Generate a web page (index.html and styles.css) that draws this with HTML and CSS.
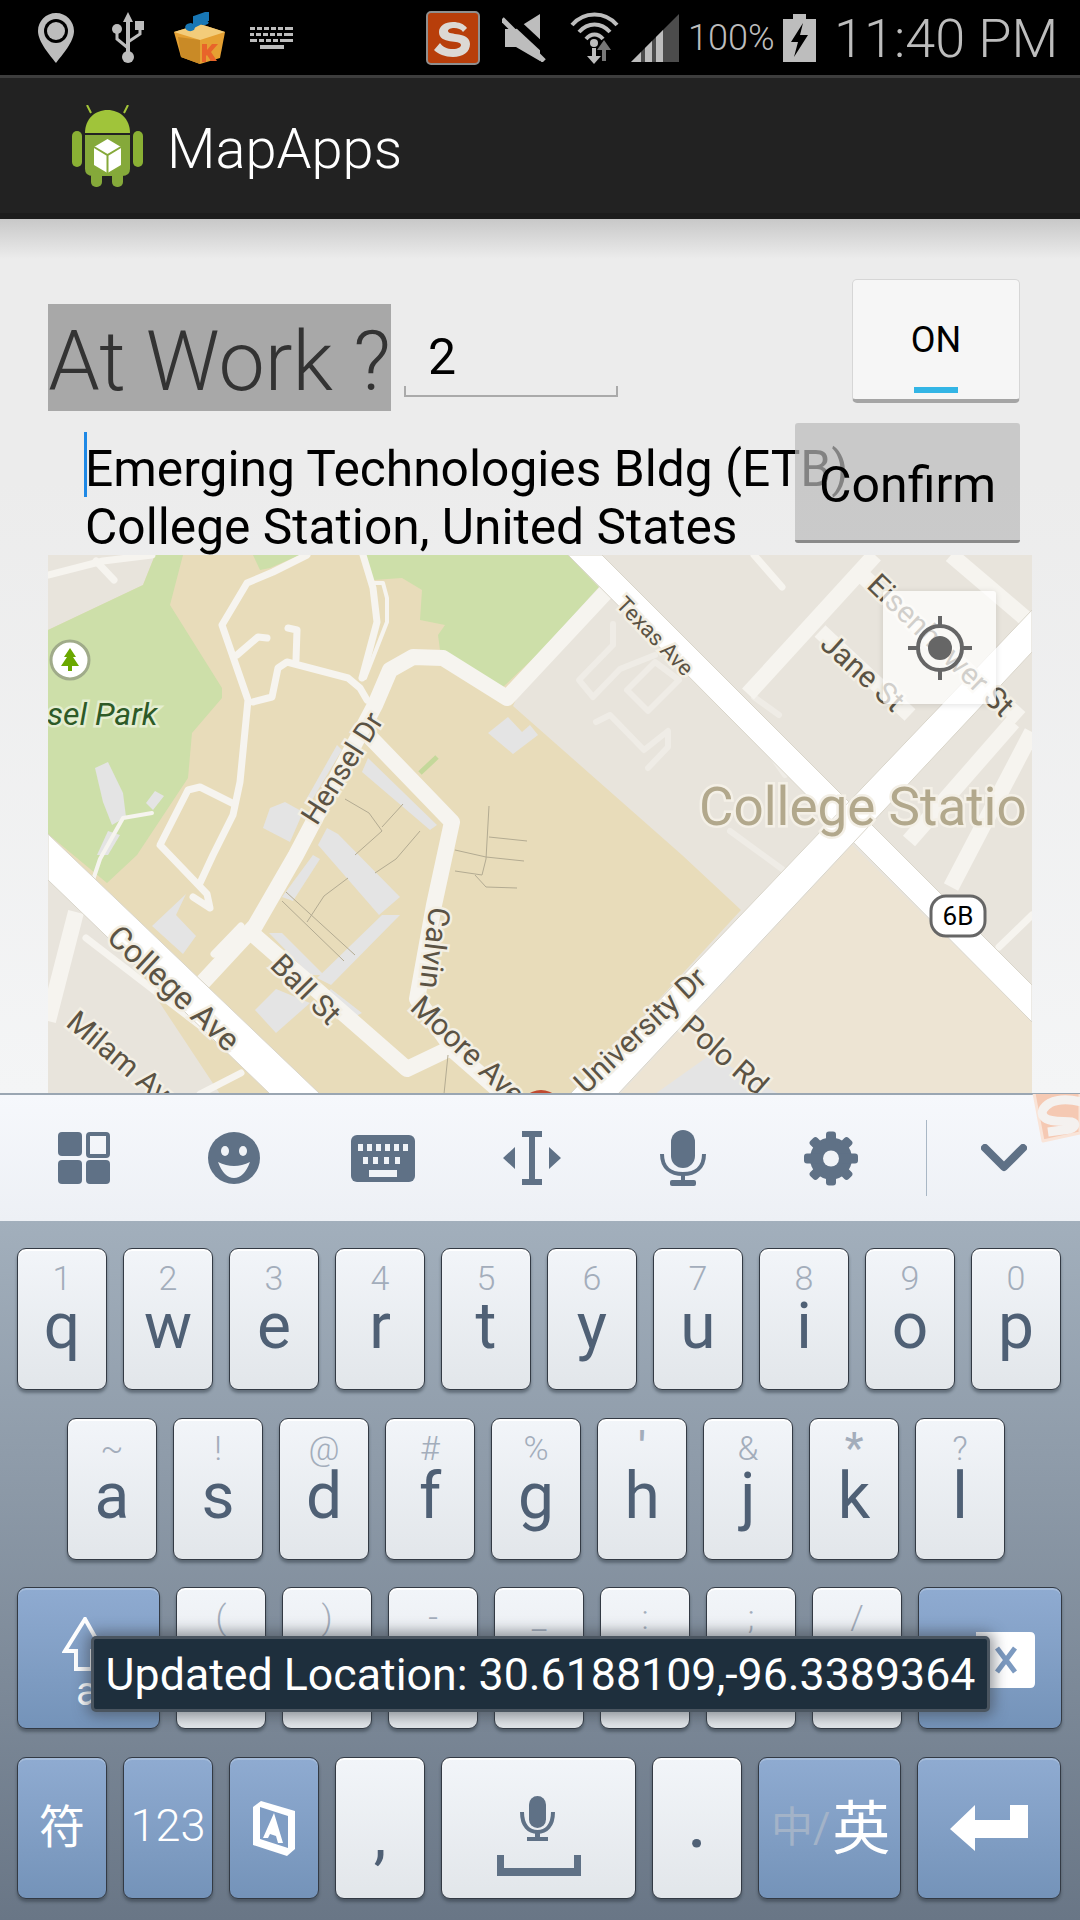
FILE: index.html
```html
<!DOCTYPE html>
<html lang="en">
<head>
    <meta charset="UTF-8">
    <meta name="viewport" content="width=device-width, initial-scale=1.0">
    <title>MapApps</title>
    <link rel="stylesheet" href="styles.css">
</head>
<body>
<div class="phone">

    <div class="status-bar">
        <svg class="sb-pin" width="36" height="50" viewBox="0 0 36 50"><path d="M18 0C8 0 0 8 0 18c0 11 12 24 18 32 6-8 18-21 18-32C36 8 28 0 18 0z" fill="#bdbdbd"/><circle cx="18" cy="18" r="12" fill="#000"/><circle cx="18" cy="18" r="9" fill="#bdbdbd"/></svg>
        <svg class="sb-usb" width="33" height="52" viewBox="0 0 33 52"><path d="M16 0l5 10h-3v30h-4V10h-3z" fill="#bdbdbd"/><circle cx="16" cy="45" r="6" fill="#bdbdbd"/><path d="M16 36L5 27V20M16 30l12-8v-7" fill="none" stroke="#bdbdbd" stroke-width="3"/><circle cx="5" cy="17" r="5" fill="#bdbdbd"/><rect x="23" y="9" width="9" height="9" fill="#bdbdbd"/></svg>
        <svg class="sb-box" width="51" height="52" viewBox="0 0 51 52"><path d="M0 20L26 12 51 20 46 46 26 52 7 45z" fill="#e5a032"/><path d="M0 20L26 28 51 20 26 12z" fill="#f3cc7a"/><path d="M26 28V52L7 45 4 25z" fill="#c98a26"/><path d="M28 32h5v6l5-6h6l-7 8 6 9h-6l-4-6-1 1v6h-4z" fill="#e8642a"/><path d="M20 16V5l14-5v9M20 16a4 3 0 1 1-1-3M34 10a4 3 0 1 1-1-3" fill="#1877b5" stroke="#1877b5" stroke-width="2"/></svg>
        <svg class="sb-kb" width="43" height="22" viewBox="0 0 43 22" fill="#bdbdbd"><rect x="0" y="0" width="5" height="3"/><rect x="7" y="0" width="5" height="3"/><rect x="14" y="0" width="5" height="3"/><rect x="21" y="0" width="5" height="3"/><rect x="28" y="0" width="5" height="3"/><rect x="35" y="0" width="8" height="3"/><rect x="0" y="6" width="4" height="3"/><rect x="6" y="6" width="5" height="3"/><rect x="13" y="6" width="5" height="3"/><rect x="20" y="6" width="5" height="3"/><rect x="27" y="6" width="5" height="3"/><rect x="34" y="6" width="9" height="3"/><rect x="0" y="12" width="7" height="3"/><rect x="9" y="12" width="5" height="3"/><rect x="16" y="12" width="5" height="3"/><rect x="23" y="12" width="5" height="3"/><rect x="30" y="12" width="13" height="3"/><rect x="10" y="18" width="24" height="4"/></svg>

        <svg class="sb-sogou" width="54" height="54" viewBox="0 0 54 54"><rect x="1" y="1" width="52" height="52" rx="4" fill="#b83e0a" stroke="#8f8f8f" stroke-width="2"/><path d="M41 17c-3-4-8-6-14-6-8 0-14 4-14 10 0 13 22 7 22 13 0 2-3 4-8 4-6 0-10-2-13-6l-6 7c4 4 11 7 19 7 10 0 17-5 17-13 0-13-22-8-22-13 0-2 3-3 6-3 4 0 7 1 9 4z" fill="#dcd8d4"/></svg>
        <svg class="sb-mute" width="49" height="48" viewBox="0 0 49 48"><path d="M38 0L14 15H3V33H14L38 47z" fill="#bdbdbd"/><path d="M5 0L49 41" stroke="#000" stroke-width="8"/><path d="M0 5L42 47" stroke="#bdbdbd" stroke-width="5"/></svg>
        <svg class="sb-wifi" width="49" height="53" viewBox="0 0 49 53"><g fill="none" stroke="#bdbdbd" stroke-width="4"><path d="M2 14C14 0 35 0 47 14"/><path d="M9 21C18 11 31 11 40 21"/><path d="M16 28C21 22 28 22 33 28"/></g><circle cx="24" cy="32" r="4" fill="#bdbdbd"/><path d="M22 37v8h-5l7 8 7-8h-5v-8z" fill="#bdbdbd"/><path d="M34 29l-7 10h5v11h4V39h5z" fill="#777"/></svg>
        <svg class="sb-signal" width="48" height="48" viewBox="0 0 48 48"><path d="M48 0V48H0z" fill="#4c4c4c"/><path d="M0 48L10 38V48zM14 34L21 27V48H14zM25 23L32 16V48H25z" fill="#bdbdbd"/></svg>
        <span class="sb-battery-text">100%</span>
        <svg class="sb-battery" width="33" height="48" viewBox="0 0 33 48"><path d="M10 0H23V5H33V48H0V5H10z" fill="#bdbdbd"/><path d="M20 9L8 28H15L11 43 25 21H17z" fill="#000"/></svg>
        <span class="sb-time">11:40 PM</span>
    </div>

    <div class="action-bar">
        <svg class="app-icon" width="71" height="82" viewBox="0 0 71 82">
            <path d="M19 8L15 0M52 8l4-8" stroke="#a4c639" stroke-width="2"/>
            <path d="M13 28C13 14 23 5 35.500 5S58 14 58 28z" fill="#a0c43a"/>
            <rect x="0" y="26" width="10" height="36" rx="5" fill="#8ab034"/>
            <rect x="61" y="26" width="10" height="36" rx="5" fill="#8ab034"/>
            <path d="M13 30H58V64Q58 71 50 71H21Q13 71 13 64z" fill="#85a93a"/>
            <rect x="19" y="66" width="11" height="16" rx="5" fill="#85a93a"/>
            <rect x="40" y="66" width="11" height="16" rx="5" fill="#85a93a"/>
            <path d="M35.500 34L49 42V60L35.500 68 22 60V42z" fill="#fff"/>
            <path d="M22 42L35.500 50 49 42M35.500 50V68" fill="none" stroke="#85a93a" stroke-width="2"/>
        </svg>
        <span class="app-title">MapApps</span>
    </div>

    <main class="content">
        <div class="top-row">
            <span class="at-work">At Work ?</span>
            <div class="number-input">2</div>
            <button class="toggle">ON<span class="toggle-light"></span></button>
        </div>

        <div class="address-row">
            <div class="address"><span class="caret"></span>Emerging Technologies Bldg (ETB)<br>College Station, United States</div>
            <button class="confirm">Confirm</button>
        </div>

        <div class="map">
            <svg class="map-canvas" width="984" height="539" viewBox="48 555 984 539">
                <rect x="48" y="555" width="984" height="539" fill="#e8e4dc"/>

                <polygon class="campus" points="155,555 582,555 513,706 682,855 741,910 572,1094 220,1094 48,834 48,630 143,585"/>
                <polygon class="plot" points="852,845 1032,1020 1032,1094 620,1094"/>
                <polygon class="park" points="155,555 183,555 170,605 222,688 222,698 192,733 188,778 137,855 107,883 48,834 48,630 143,585"/>
                <polygon class="park" points="253,555 300,555 270,568 260,570"/>
                <polygon class="park" points="362,555 568,555 599,587 540,652 503,687 440,650 438,635 445,625 420,620 422,590 402,578 373,580"/>
                <path d="M420 773L437 757" stroke="#c4d89a" stroke-width="5"/>

                <g class="building">
                    <polygon points="95,768 108,762 123,793 126,817 112,825 103,802"/>
                    <polygon points="155,791 164,796 153,810 146,803"/>
                    <polygon points="108,831 120,835 108,855 97,855"/>
                    <polygon points="285,802 303,812 290,842 263,828 270,808"/>
                    <polygon points="327,828 338,834 400,897 379,915 318,845"/>
                    <polygon points="337,745 342,750 312,800 307,798"/>
                    <polygon points="368,758 437,825 430,830 362,772"/>
                    <polygon points="186,894 152,926 183,954 196,936 176,915"/>
                    <polygon points="508,717 522,732 530,725 538,735 513,754 488,733"/>
                    <polygon points="276,989 255,1010 276,1033 310,1003"/>
                    <polygon points="710,1055 655,1094 779,1094"/>
                    <polygon points="382,915 400,915 331,985 317,978"/>
                    <polygon points="269,933 282,933 324,975 310,975"/>
                    <polygon points="282,897 313,855 320,859 293,901"/>
                    <polygon points="331,989 362,1013 344,1022 317,999"/>
                </g>

                <g class="paths">
                    <polyline points="307,555 273,572 247,583 222,625 248,700 240,782 233,815 213,855 200,883"/>
                    <polyline points="363,555 373,588 377,622 362,678"/>
                    <polyline class="thin" points="373,583 383,583 387,598 387,622 365,678"/>
                    <polyline points="48,575 103,561 152,555"/>
                    <polyline points="96,561 114,580"/>
                    <polyline points="237,655 258,637 267,638"/>
                    <polyline points="288,628 297,630 296,660"/>
                    <polyline points="253,702 272,697 278,668 287,662 348,678 360,688 367,700"/>
                    <polyline points="232,803 200,787 188,790 160,845 207,894 210,908 193,897"/>
                    <polyline class="thin" points="152,813 123,818 100,859 93,880"/>
                    <polyline points="754,555 782,587"/>
                    <polyline class="lot" points="730,831 782,869"/>
                    <polyline class="lot" points="758,736 785,775"/>
                    <polyline class="lot" points="754,697 779,715"/>
                    <polyline class="lot" points="613,624 613,645 579,680 593,697 620,669 655,655"/>
                    <polygon class="lot" points="655,662 627,690 648,711 679,680"/>
                    <polyline class="lot" points="596,722 610,715 644,750 668,731 668,747 648,768"/>
                    <polyline points="241,1073 200,1094"/>
                    <polyline points="241,926 214,954"/>
                    <polyline points="86,938 289,1094"/>
                    <polyline points="1032,915 999,947"/>
                </g>

                <g class="streets">
                    <polyline points="606,592 507,698 443,658 413,657 390,670 375,705 296,855 255,926 203,982"/>
                    <polyline points="370,737 452,822 434,905 417,999 455,1052 503,1094"/>
                    <polyline points="255,936 407,1069 451,1048"/>
                    <polyline points="76,912 48,1021"/>
                    <polyline points="875,555 748,694"/>
                    <polyline points="951,555 1032,624"/>
                    <polyline points="854,568 1020,718"/>
                    <polyline points="820,631 910,715"/>
                    <polyline points="1013,722 909,841"/>
                    <polyline points="1032,732 951,887"/>
                </g>

                <g class="contours">
                    <polyline points="345,799 369,813 382,831 355,855"/>
                    <polyline points="403,804 382,827"/>
                    <polyline points="420,831 396,859 375,873"/>
                    <polyline points="489,806 486,859 482,875 455,871"/>
                    <polyline points="489,837 527,841"/>
                    <polyline points="455,850 486,857 524,861"/>
                    <polyline points="475,875 486,887 517,888"/>
                    <polyline points="348,878 324,896 307,922"/>
                    <polyline points="286,892 355,955"/>
                    <polyline points="282,901 344,961"/>
                    <polyline points="448,1055 444,1094"/>
                </g>

                <g class="highways">
                    <polygon points="568,555 602,555 1032,985 1032,1022"/>
                    <polygon points="48,834 48,880 270,1094 320,1094"/>
                    <polygon points="1032,610 1032,652 618,1094 570,1094"/>
                </g>

                <circle cx="70" cy="660" r="19" fill="#fff" stroke="#a0ab8a" stroke-width="3"/>
                <path d="M70 648l6 9h-3l6 9h-7v5h-4v-5h-7l6-9h-3z" fill="#6aa800"/>
                <circle cx="541" cy="1112" r="22" fill="#c0492f"/>

                <text class="park-label" x="47" y="725">sel Park</text>
                <text class="big-label" x="699" y="825">College Statio</text>

                <g text-anchor="middle">
                    <text class="road-label small" transform="translate(655 636) rotate(46)" dy=".35em">Texas Ave</text>
                    <text class="road-label" transform="translate(941 645) rotate(44)" dy=".35em">Eisenhower St</text>
                    <text class="road-label" transform="translate(863 672) rotate(42)" dy=".35em">Jane St</text>
                    <text class="road-label mid" transform="translate(342 768) rotate(-57.500)" dy=".35em">Hensel Dr</text>
                    <text class="road-label" transform="translate(435 948) rotate(97)" dy=".35em">Calvin</text>
                    <text class="road-label" transform="translate(468 1050) rotate(43)" dy=".35em">Moore Ave</text>
                    <text class="road-label large" transform="translate(174 988) rotate(43)" dy=".35em">College Ave</text>
                    <text class="road-label" transform="translate(306 989) rotate(45)" dy=".35em">Ball St</text>
                    <text class="road-label" transform="translate(125 1062) rotate(40)" dy=".35em">Milam Ave</text>
                    <text class="road-label" transform="translate(640 1030) rotate(-43)" dy=".35em">University Dr</text>
                    <text class="road-label" transform="translate(725 1055) rotate(41)" dy=".35em">Polo Rd</text>
                </g>

                <rect x="931" y="896" width="54" height="40" rx="15" fill="#fff" stroke="#666" stroke-width="3"/>
                <text class="shield-label" x="958" y="925" text-anchor="middle">6B</text>
            </svg>

            <div class="my-location">
                <svg width="68" height="68" viewBox="0 0 68 68"><circle cx="34" cy="34" r="22" fill="none" stroke="#666" stroke-width="4"/><circle cx="34" cy="34" r="12" fill="#666"/><path d="M34 2v10M34 56v10M2 34h10M56 34h10" stroke="#666" stroke-width="4"/></svg>
            </div>
        </div>
    </main>

    <div class="keyboard">
        <div class="kb-tools">
            <svg class="tool-grid" width="52" height="52" viewBox="0 0 52 52"><rect width="24" height="24" rx="4" fill="#5f7186"/><rect x="30" y="2" width="20" height="22" rx="2" fill="none" stroke="#5f7186" stroke-width="4"/><rect y="28" width="24" height="24" rx="4" fill="#5f7186"/><rect x="28" y="28" width="24" height="24" rx="4" fill="#5f7186"/></svg>
            <svg class="tool-smile" width="52" height="52" viewBox="0 0 52 52"><circle cx="26" cy="26" r="26" fill="#5f7186"/><ellipse cx="17" cy="19" rx="4" ry="5" fill="#f0f3f7"/><ellipse cx="35" cy="19" rx="4" ry="5" fill="#f0f3f7"/><path d="M10 30Q26 38 42 30Q36 46 26 46T10 30z" fill="#f0f3f7"/></svg>
            <svg class="tool-keys" width="64" height="47" viewBox="0 0 64 47"><rect width="64" height="47" rx="6" fill="#5f7186"/><g fill="#f0f3f7"><rect x="7" y="9" width="5" height="7"/><rect x="16" y="9" width="5" height="7"/><rect x="25" y="9" width="5" height="7"/><rect x="34" y="9" width="5" height="7"/><rect x="43" y="9" width="5" height="7"/><rect x="52" y="9" width="5" height="7"/><rect x="12" y="22" width="5" height="7"/><rect x="22" y="22" width="5" height="7"/><rect x="33" y="22" width="5" height="7"/><rect x="44" y="22" width="5" height="7"/><rect x="18" y="35" width="28" height="7"/></g></svg>
            <svg class="tool-cursor" width="58" height="54" viewBox="0 0 58 54" fill="#5f7186"><path d="M19 0H39V6H32V48H39V54H19V48H26V6H19z"/><path d="M0 27L12 16V38zM58 27L46 16V38z"/></svg>
            <svg class="tool-mic" width="46" height="56" viewBox="0 0 46 56" fill="#5f7186"><rect x="11" y="0" width="24" height="38" rx="12"/><path d="M2 24C2 38 11 44 23 44S44 38 44 24" fill="none" stroke="#5f7186" stroke-width="4"/><rect x="21" y="42" width="4" height="10"/><rect x="10" y="50" width="26" height="6" rx="2"/></svg>
            <svg class="tool-gear" width="54" height="55" viewBox="0 0 54 55" fill="#5f7186"><g transform="translate(27 27.500)"><circle r="21"/><rect x="-5" y="-27" width="10" height="54" rx="3"/><rect x="-5" y="-27" width="10" height="54" rx="3" transform="rotate(45)"/><rect x="-5" y="-27" width="10" height="54" rx="3" transform="rotate(90)"/><rect x="-5" y="-27" width="10" height="54" rx="3" transform="rotate(135)"/><circle r="8" fill="#f0f3f7"/></g></svg>
            <span class="tool-divider"></span>
            <svg class="tool-down" width="46" height="28" viewBox="0 0 46 28"><path d="M4 4L23 23 42 4" fill="none" stroke="#5f7186" stroke-width="8" stroke-linejoin="round" stroke-linecap="round"/></svg>
        </div>

        <div class="kb-keys">
            <div class="kb-row">
                <div class="key"><span class="hint">1</span><span class="letter">q</span></div>
                <div class="key"><span class="hint">2</span><span class="letter">w</span></div>
                <div class="key"><span class="hint">3</span><span class="letter">e</span></div>
                <div class="key"><span class="hint">4</span><span class="letter">r</span></div>
                <div class="key"><span class="hint">5</span><span class="letter">t</span></div>
                <div class="key"><span class="hint">6</span><span class="letter">y</span></div>
                <div class="key"><span class="hint">7</span><span class="letter">u</span></div>
                <div class="key"><span class="hint">8</span><span class="letter">i</span></div>
                <div class="key"><span class="hint">9</span><span class="letter">o</span></div>
                <div class="key"><span class="hint">0</span><span class="letter">p</span></div>
            </div>
            <div class="kb-row row-home">
                <div class="key"><span class="hint">~</span><span class="letter">a</span></div>
                <div class="key"><span class="hint">!</span><span class="letter">s</span></div>
                <div class="key"><span class="hint">@</span><span class="letter">d</span></div>
                <div class="key"><span class="hint">#</span><span class="letter">f</span></div>
                <div class="key"><span class="hint">%</span><span class="letter">g</span></div>
                <div class="key"><span class="hint heavy">'</span><span class="letter">h</span></div>
                <div class="key"><span class="hint">&amp;</span><span class="letter">j</span></div>
                <div class="key"><span class="hint heavy">*</span><span class="letter">k</span></div>
                <div class="key"><span class="hint">?</span><span class="letter">l</span></div>
            </div>
            <div class="kb-row">
                <div class="key blue wide shift">
                    <svg width="60" height="60" viewBox="0 0 60 60"><path d="M23 2L3 34H14V52H30V34H41z" fill="none" stroke="#fff" stroke-width="4"/></svg>
                    <span class="shift-a">a</span>
                </div>
                <div class="key"><span class="hint">(</span></div>
                <div class="key"><span class="hint">)</span></div>
                <div class="key"><span class="hint">-</span></div>
                <div class="key"><span class="hint">_</span></div>
                <div class="key"><span class="hint">:</span></div>
                <div class="key"><span class="hint">;</span></div>
                <div class="key"><span class="hint">/</span></div>
                <div class="key blue wide del">
                    <svg width="64" height="56" viewBox="0 0 64 56"><path d="M5 0H59Q64 0 64 5V51Q64 56 59 56H5z" fill="#fff"/><path d="M26 16L44 40M44 16L26 40" stroke="#7c9ac0" stroke-width="5"/></svg>
                </div>
            </div>
            <div class="kb-row">
                <div class="key blue"><span class="fn-text fu">符</span></div>
                <div class="key blue"><span class="fn-text">123</span></div>
                <div class="key blue">
                    <svg width="46" height="58" viewBox="0 0 46 58"><path d="M2 8L10 2 44 12V50L36 57 2 46z" fill="#fff"/><path d="M9 8L37 17V49L9 40z" fill="#7f9dc4"/><path d="M23 14L32 44H27L25 37 19 35 17 39H12z" fill="#fff"/></svg>
                </div>
                <div class="key"><span class="punct">,</span></div>
                <div class="key space">
                    <svg width="84" height="80" viewBox="0 0 84 80" fill="#5f7186"><rect x="32" y="0" width="17" height="32" rx="8.500"/><path d="M25 16C25 30 32 36 40.500 36S56 30 56 16" fill="none" stroke="#5f7186" stroke-width="4"/><rect x="38" y="36" width="5" height="7"/><rect x="30" y="41" width="21" height="4"/><path d="M0 59H7V72H77V59H84V80H0z"/></svg>
                </div>
                <div class="key"><span class="punct dot">.</span></div>
                <div class="key blue wide lang"><span class="lang-off">中/</span><span class="lang-on">英</span></div>
                <div class="key blue wide enter">
                    <svg width="78" height="46" viewBox="0 0 78 46"><path d="M0 24L25 0V15H60V0H78V33H25V46z" fill="#fff"/></svg>
                </div>
            </div>
        </div>

        <div class="toast">Updated Location: 30.6188109,-96.3389364</div>

        <svg class="sogou-float" width="50" height="50" viewBox="0 0 50 50"><path d="M3 -6L13 47 50 39V-6z" fill="#f5c9b3" stroke="#f9e4d8" stroke-width="3" stroke-linejoin="round"/><path d="M52 8C40 5 28 5 20 9 13 13 10 19 14 23 18 28 30 27 42 28 46 29 46 33 40 35L18 38" fill="none" stroke="#f4f1ef" stroke-width="9"/></svg>
    </div>
</div>
</body>
</html>
```

FILE: styles.css
```css
* {
    box-sizing: border-box;
}
body {
    margin: 0;
    font-family: Roboto, "Noto Sans CJK SC", sans-serif;
}
.phone {
    width: 1080px;
    height: 1920px;
    overflow: hidden;
    position: relative;
    background: #eee;
}

/* status bar */
.status-bar {
    height: 75px;
    background: #000;
    display: flex;
    align-items: center;
    color: #bdbdbd;
}
.status-bar svg {
    flex: none;
}
.sb-pin { margin-left: 38px; }
.sb-usb { margin-left: 38px; }
.sb-box { margin-left: 29px; }
.sb-kb { margin-left: 25px; }
.sb-sogou { margin-left: 133px; }
.sb-mute { margin-left: 22px; }
.sb-wifi { margin-left: 19px; }
.sb-signal { margin-left: 12px; }
.sb-battery-text {
    margin-left: 9px;
    width: 86px;
    font-size: 36px;
    font-weight: 300;
    white-space: nowrap;
}
.sb-battery { margin-left: 9px; }
.sb-time {
    margin: 2px 0 0 18px;
    font-size: 54px;
    font-weight: 300;
    white-space: nowrap;
}

/* action bar */
.action-bar {
    height: 144px;
    background: #222;
    border-top: 3px solid #3d3d3d;
    border-bottom: 6px solid #1c1c1c;
    display: flex;
    align-items: center;
    padding-left: 72px;
}
.app-title {
    margin: 6px 0 0 24px;
    font-size: 56px;
    font-weight: 300;
    color: #fff;
}

/* form */
.content {
    height: 874px;
    padding: 60px 48px 0;
    background: linear-gradient(#ececec 5%, #ececec 30%, #f4f5f6);
    position: relative;
}
.content::before {
    content: "";
    position: absolute;
    left: 0;
    right: 0;
    top: 0;
    height: 40px;
    background: linear-gradient(#c8c8c8, #ececec);
}
.top-row {
    position: relative;
    display: flex;
    align-items: flex-start;
    height: 144px;
    margin-right: 12px;
}
.at-work {
    margin-top: 25px;
    width: 343px;
    height: 107px;
    background: #a8a8a8;
    color: #333;
    font-size: 82.500px;
    font-weight: 300;
    line-height: 116px;
    text-align: center;
    white-space: nowrap;
}
.number-input {
    margin: 53px 0 0 13px;
    width: 214px;
    height: 65px;
    padding-left: 22px;
    font-size: 50px;
    line-height: 50px;
    color: #000;
    border: 2px solid #aaa;
    border-top: 0;
    position: relative;
    border-image: linear-gradient(transparent 84%, #aaa 84%) 1;
}
.toggle {
    margin-left: auto;
    width: 168px;
    height: 124px;
    position: relative;
    border: 1px solid #d6d6d6;
    border-radius: 5px;
    border-bottom: 4px solid #a5a5a5;
    background: #f6f6f6;
    color: #000;
    font-family: inherit;
    font-size: 36px;
    padding: 0;
}
.toggle-light {
    position: absolute;
    left: 61px;
    bottom: 6px;
    width: 44px;
    height: 6px;
    background: #33b5e5;
}
.address-row {
    position: relative;
    display: flex;
    height: 132px;
    margin-right: 12px;
}
.address {
    flex: 1;
    min-width: 0;
    padding: 17px 0 0 37px;
    font-size: 49.700px;
    line-height: 58px;
    color: #000;
    white-space: nowrap;
}
.caret {
    position: absolute;
    left: 36px;
    top: 9px;
    width: 3px;
    height: 65px;
    background: #1e88e5;
}
.confirm {
    flex: none;
    position: relative;
    width: 225px;
    height: 120px;
    border: 0;
    border-radius: 3px;
    border-bottom: 3px solid #8a8a8a;
    background: rgba(186, 186, 186, .7);
    color: #000;
    font-family: inherit;
    font-size: 50px;
    padding: 7px 0 0 24px;
    text-align: left;
    white-space: nowrap;
}

/* map */
.map {
    position: relative;
    height: 539px;
}
.map-canvas {
    display: block;
}
.campus { fill: #e8dcba; }
.plot { fill: #ede4d3; }
.park { fill: #cddfa9; }
.building { fill: #e4e4e4; }
.paths polyline, .paths polygon {
    fill: none;
    stroke: #f6f4ef;
    stroke-width: 7;
    stroke-linejoin: round;
    stroke-linecap: round;
}
.paths .thin {
    stroke-width: 4;
}
.paths .lot {
    stroke: #efece6;
    stroke-width: 6;
}
.streets polyline {
    fill: none;
    stroke: #f6f4ef;
    stroke-width: 16;
    stroke-linejoin: round;
}
.contours polyline {
    fill: none;
    stroke: #b3ab92;
    stroke-width: 1;
}
.highways polygon {
    fill: #fff;
    stroke: #d9d5ca;
    stroke-width: 1;
}
.road-label {
    font-size: 30px;
    fill: #5b5344;
    stroke: #f3efe4;
    stroke-width: 5px;
    paint-order: stroke;
}
.road-label.small {
    font-size: 22px;
}
.road-label.mid {
    font-size: 29px;
}
.road-label.large {
    font-size: 32px;
}
.park-label {
    font-size: 32px;
    font-style: italic;
    fill: #2d5a27;
    stroke: #e4eed0;
    stroke-width: 5px;
    paint-order: stroke;
}
.big-label {
    font-size: 53px;
    fill: #b2a88c;
    stroke: #f4f0e7;
    stroke-width: 5px;
    paint-order: stroke;
}
.shield-label {
    font-size: 26px;
    fill: #000;
}
.my-location {
    position: absolute;
    left: 835px;
    top: 36px;
    width: 113px;
    height: 113px;
    background: rgba(255, 255, 255, .72);
    border-radius: 3px;
    box-shadow: 0 1px 6px rgba(0, 0, 0, .12);
    display: flex;
    align-items: center;
    justify-content: center;
}

/* keyboard */
.keyboard {
    position: relative;
    height: 827px;
    background: linear-gradient(#a2afbc 128px, #697686);
}
.kb-tools {
    height: 128px;
    border-top: 2px solid #9aa6b2;
    background: linear-gradient(#f6f8fc, #edf0f5);
    display: flex;
    align-items: center;
}
.kb-tools svg {
    flex: none;
}
.tool-grid { margin-left: 58px; }
.tool-smile { margin-left: 98px; }
.tool-keys { margin-left: 91px; }
.tool-cursor { margin-left: 88px; }
.tool-mic { margin-left: 99px; }
.tool-gear { margin-left: 98px; }
.tool-divider {
    margin-left: 68px;
    width: 1px;
    height: 76px;
    background: #a9b7c5;
}
.tool-down { margin-left: 54px; }

.kb-keys {
    padding: 27px 19px 0 17px;
    display: flex;
    flex-direction: column;
    gap: 27.500px;
}
.kb-row {
    display: flex;
    gap: 16px;
    height: 142px;
}
.row-home {
    padding-left: 50px;
}
.key {
    flex: none;
    position: relative;
    width: 90px;
    height: 142px;
    border: 1px solid #333a44;
    border-radius: 9px;
    background: linear-gradient(#f2f5f9, #e2e6ea);
    box-shadow: inset 0 2px 0 #fff, 0 3px 3px rgba(40, 50, 60, .45);
    padding-top: 12px;
    display: flex;
    flex-direction: column;
    align-items: center;
}
.hint {
    font-size: 34px;
    line-height: 34px;
    font-weight: 300;
    color: #a3adbb;
}
.hint.heavy {
    font-size: 42px;
    font-weight: 500;
}
.letter {
    font-size: 64px;
    line-height: 64px;
    color: #4f6075;
}
.punct {
    font-size: 64px;
    line-height: 64px;
    color: #4f6075;
    margin-top: 34px;
}
.punct.dot {
    margin-top: 24px;
    font-weight: 500;
}
.key.blue {
    background: linear-gradient(#8fabd1, #7493b9);
    box-shadow: inset 0 2px 0 #a5bcdb, 0 3px 3px rgba(40, 50, 60, .45);
    justify-content: center;
    padding-top: 0;
}
.key.wide {
    width: 143px;
}
.key.space {
    width: 195px;
    justify-content: center;
    padding-top: 16px;
}
.key.del, .key.enter {
    width: 144px;
}
.shift svg {
    position: absolute;
    left: 44px;
    top: 29px;
}
.shift-a {
    position: absolute;
    left: 58px;
    top: 80px;
    color: #fff;
    font-size: 40px;
}
.del svg {
    position: absolute;
    left: 52px;
    top: 44px;
}
.fn-text {
    font-size: 45px;
    font-weight: 300;
    color: #fff;
    margin-bottom: 4px;
}
.fn-text.fu {
    font-size: 46px;
    font-weight: 400;
    margin-bottom: 10px;
}
.key.lang {
    flex-direction: row;
    align-items: center;
    justify-content: flex-start;
    padding: 0 0 8px 12px;
}
.lang-off {
    font-size: 42px;
    color: #a3b3c8;
    white-space: nowrap;
}
.lang-on {
    font-size: 58px;
    margin-left: 2px;
    color: #fff;
}

.toast {
    position: absolute;
    left: 91px;
    top: 543px;
    width: 899px;
    height: 76px;
    border: 3px solid #4a5560;
    border-radius: 5px;
    background: #1e2f3d;
    box-shadow: 0 0 14px 4px rgba(60, 66, 74, .55);
    color: #fff;
    font-size: 44.700px;
    line-height: 72px;
    text-align: center;
    white-space: nowrap;
}
.sogou-float {
    position: absolute;
    right: 0;
    top: 1px;
}
```
